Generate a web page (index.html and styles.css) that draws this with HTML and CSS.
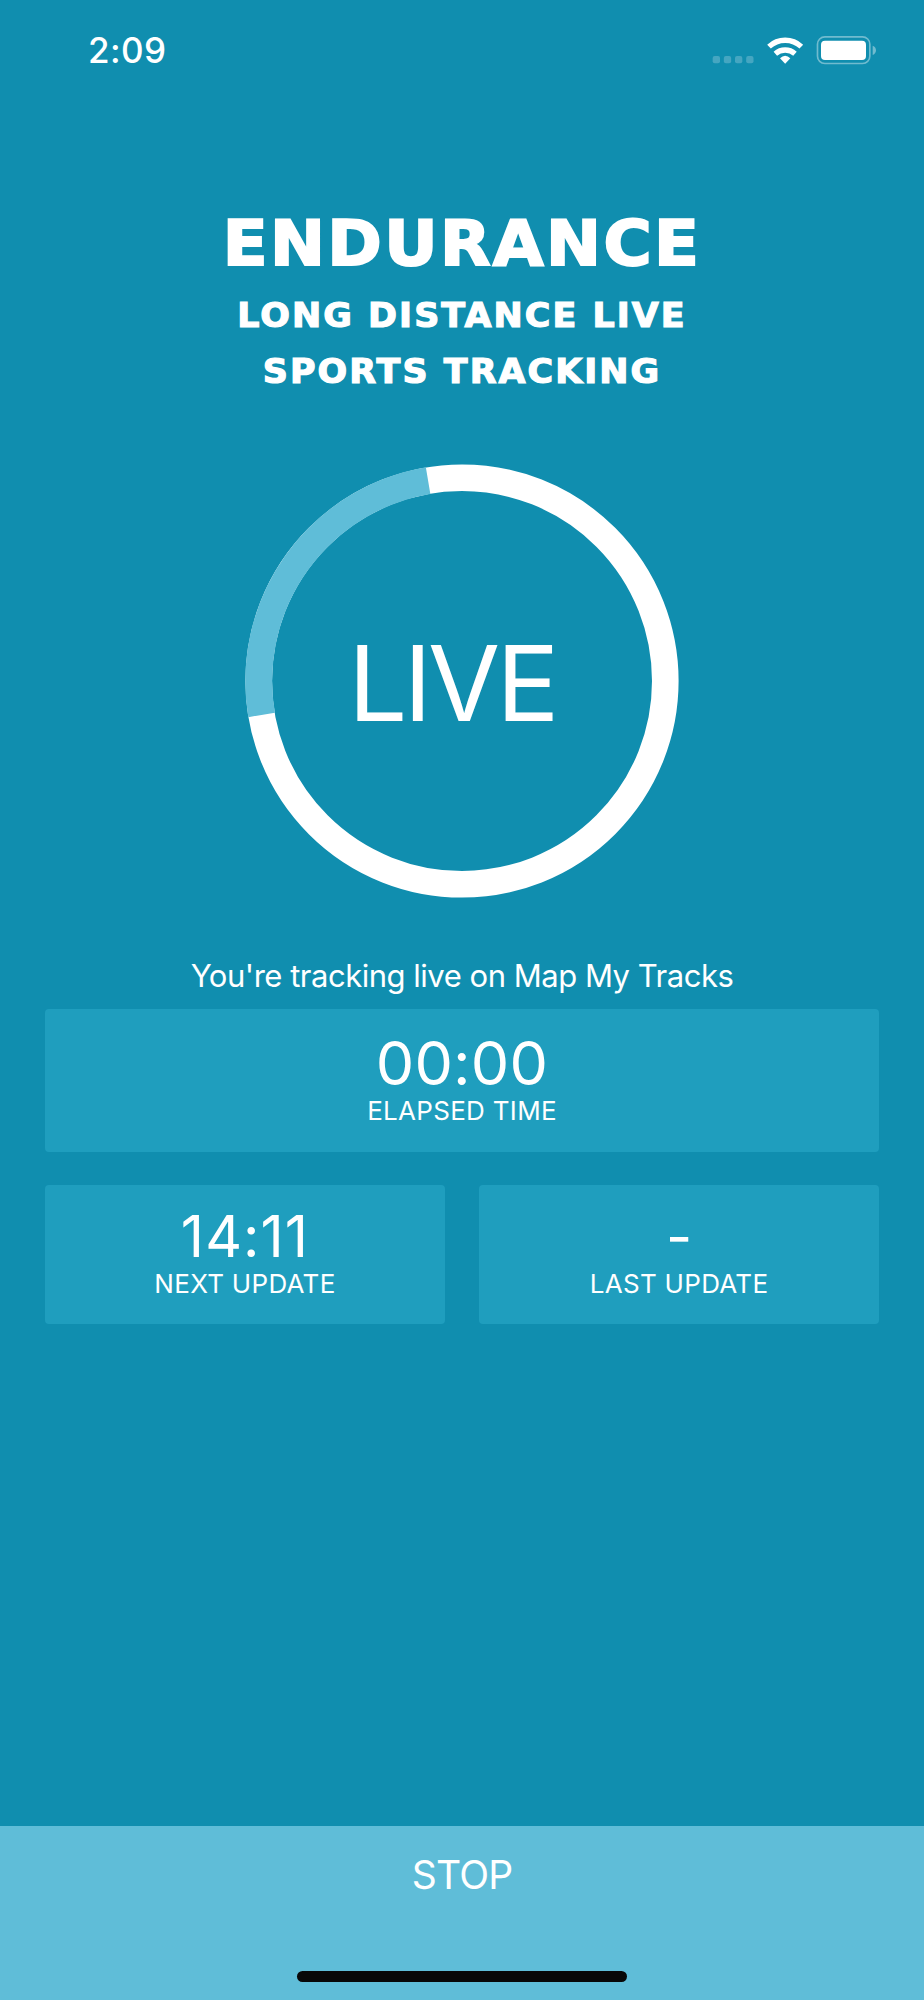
FILE: index.html
```html
<!DOCTYPE html>
<html lang="en">
<head>
  <meta charset="UTF-8">
  <meta name="viewport" content="width=device-width, initial-scale=1.0">
  <title>Endurance</title>
  <link rel="stylesheet" href="styles.css">
</head>
<body>
  <div class="screen">
    <header class="status-bar">
      <span class="clock">2:09</span>
      <svg class="status-icons" viewBox="0 0 570 180">
        <!-- signal -->
        <g fill="#45a6c1">
          <rect x="38" y="108" width="22" height="22" rx="6"/>
          <rect x="71.500" y="108" width="22" height="22" rx="6"/>
          <rect x="105" y="108" width="22" height="22" rx="6"/>
          <rect x="138.500" y="108" width="22" height="22" rx="6"/>
        </g>
        <!-- wifi -->
        <g fill="none" stroke="#fff" stroke-width="16">
          <path d="M207 80A71 71 0 0 1 304 80"/>
          <path d="M226 101A45 45 0 0 1 285 101"/>
        </g>
        <path d="M240 115Q255.500 100 271 115L255.500 131Z" fill="#fff"/>
        <!-- battery -->
        <rect x="352.500" y="50.500" width="157" height="80" rx="22" fill="none" stroke="#70bbcf" stroke-width="5"/>
        <rect x="363" y="62" width="135" height="58" rx="12" fill="#fff"/>
        <path d="M518 77Q528 81 528 91T518 105Z" fill="#70bbcf"/>
      </svg>
    </header>

    <main class="content">
      <h1 class="title">ENDURANCE</h1>
      <h2 class="subtitle">
        <span class="line-one">LONG DISTANCE LIVE</span>
        <span class="line-two">SPORTS TRACKING</span>
      </h2>

      <div class="ring">
        <svg class="ring-svg" viewBox="0 0 434 434">
          <circle cx="217" cy="217" r="203.300" fill="none" stroke="#fff" stroke-width="26.600"/>
          <path d="M16.600 250.900A203.300 203.300 0 0 1 183.100 16.600" fill="none" stroke="#5fbdd8" stroke-width="27"/>
        </svg>
        <span class="ring-text">LIVE</span>
      </div>

      <p class="message">You're tracking live on Map My Tracks</p>

      <section class="stats">
        <div class="card card-wide">
          <span class="value elapsed">00:00</span>
          <span class="label label-elapsed">ELAPSED TIME</span>
        </div>
        <div class="card">
          <span class="value next">14:11</span>
          <span class="label label-next">NEXT UPDATE</span>
        </div>
        <div class="card">
          <span class="value last">-</span>
          <span class="label label-last">LAST UPDATE</span>
        </div>
      </section>
    </main>

    <footer class="footer">
      <button class="stop" type="button">STOP</button>
      <div class="home-bar"></div>
    </footer>
  </div>
</body>
</html>
```
FILE: styles.css
```css
* {
  box-sizing: border-box;
}
body {
  margin: 0;
  background: #108eaf;
  color: #fff;
  font-family: Inter, "Liberation Sans", sans-serif;
}
.screen {
  display: flex;
  flex-direction: column;
  width: 924px;
  height: 2000px;
}
.status-bar {
  display: flex;
  justify-content: space-between;
  height: 206px;
  padding: 20px 34px 0 88px;
}
.clock {
  height: 61px;
  font-size: 35px;
  font-weight: 500;
  line-height: 61px;
  letter-spacing: 0.4px;
}
.status-icons {
  width: 190px;
  height: 60px;
}
.content {
  flex: 1;
  text-align: center;
}
.title,
.subtitle {
  margin: 0;
  font-family: "DejaVu Sans", sans-serif;
  font-weight: bold;
  white-space: nowrap;
}
.title {
  height: 76px;
  font-size: 62px;
  line-height: 76px;
  letter-spacing: 2.2px;
  -webkit-text-stroke: 2px #fff;
  transform: scaleX(1.06);
}
.subtitle {
  padding-top: 6px;
  font-size: 33.5px;
  line-height: 56px;
  letter-spacing: 2px;
  -webkit-text-stroke: 1.2px #fff;
  transform: scaleX(1.04);
}
.subtitle span {
  display: block;
}
.ring {
  display: flex;
  align-items: center;
  justify-content: center;
  position: relative;
  width: 434px;
  height: 434px;
  margin: 64px auto 0;
}
.ring-svg {
  position: absolute;
  inset: 0;
}
.ring-text {
  position: relative;
  padding: 4px 20px 0 0;
  font-size: 104.5px;
  line-height: 120px;
  letter-spacing: -3.6px;
}
.message {
  height: 111px;
  margin: 0;
  padding-top: 57px;
  font-size: 31px;
  line-height: 41px;
  letter-spacing: -0.48px;
  white-space: nowrap;
}
.stats {
  display: grid;
  grid-template-columns: 400px 400px;
  column-gap: 34px;
  row-gap: 33px;
  justify-content: center;
}
.card {
  display: flex;
  flex-direction: column;
  align-items: center;
  height: 139px;
  padding-top: 21px;
  border-radius: 4px;
  background: #1f9ebe;
}
.card-wide {
  grid-column: 1 / 3;
  height: 143px;
  padding-top: 23px;
}
.value {
  font-size: 57px;
  line-height: 61px;
}
.elapsed {
  font-size: 61px;
  line-height: 62px;
  letter-spacing: 0.2px;
}
.next {
  letter-spacing: 1.1px;
}
.label {
  font-size: 26px;
  line-height: 33px;
  letter-spacing: 0.3px;
}
.footer {
  display: flex;
  flex-direction: column;
  align-items: center;
  justify-content: space-between;
  height: 174px;
  padding: 24px 0 18px;
  background: #5fbdd8;
}
.stop {
  padding: 0;
  border: 0;
  background: none;
  color: #fff;
  font-family: inherit;
  font-size: 39px;
  line-height: 50px;
  letter-spacing: -0.8px;
}
.home-bar {
  width: 330px;
  height: 11px;
  border-radius: 6px;
  background: #080808;
}
```
